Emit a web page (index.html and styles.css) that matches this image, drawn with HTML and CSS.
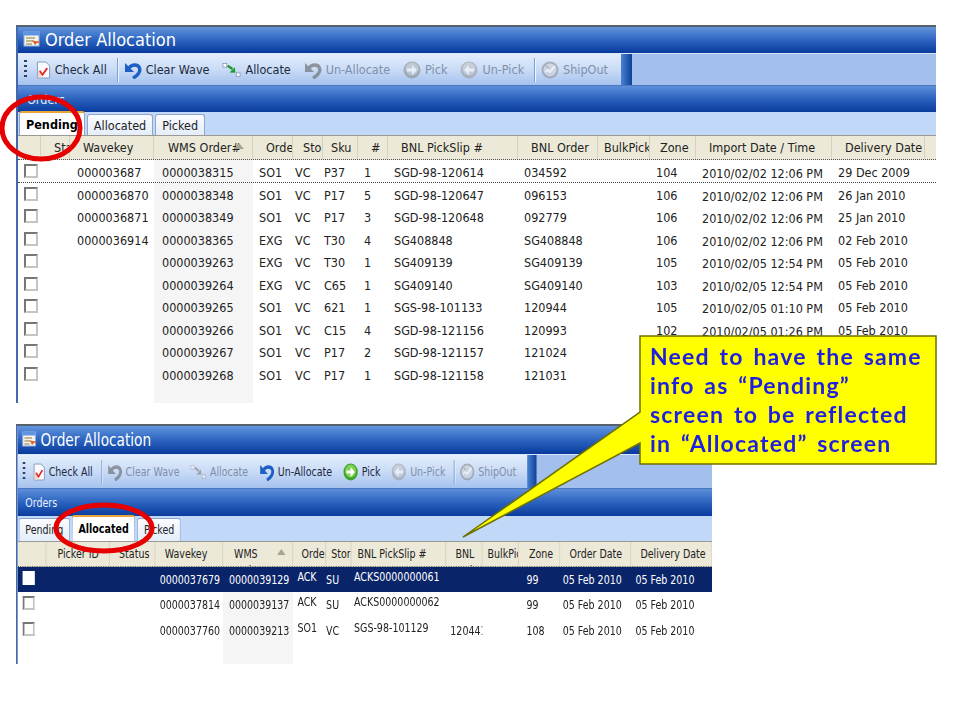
FILE: index.html
```html
<!DOCTYPE html>
<html lang="en">
<head>
  <meta charset="UTF-8">
  <meta name="viewport" content="width=device-width, initial-scale=1.0">
  <title>Order Allocation</title>
  <link rel="stylesheet" href="styles.css">
</head>
<body>
  <svg class="defs" width="0" height="0">
    <symbol id="i-form" viewBox="0 0 18 16">
      <rect x="1" y="1" width="15" height="14" fill="#f4f4ee" stroke="#8fb0e0"/>
      <rect x="1" y="1" width="15" height="3.500" fill="#5f95e0"/>
      <path d="M3 7h9M3 10h7M3 13h6" stroke="#b0a070" stroke-width="1.300"/>
      <path d="M9 9l6 2-3 3z" fill="#e0602a"/>
      <path d="M12 11h5" stroke="#e0602a" stroke-width="1.500"/>
    </symbol>
    <symbol id="i-check" viewBox="0 0 16 20">
      <path d="M1.500 1.500h9l4 4v13h-13z" fill="#fbfbff" stroke="#7f93b8"/>
      <path d="M2 10h4v8H2z" fill="#f3d8c8"/>
      <path d="M4 11l3 4 5-7" fill="none" stroke="#e02a2a" stroke-width="2"/>
    </symbol>
    <symbol id="i-undo" viewBox="0 0 18 18">
      <path d="M1 2v9h9z" fill="currentColor"/>
      <path d="M5 7c3-4 9-4 10.500 0 1.500 4-2.500 8-6.500 10" fill="none" stroke="currentColor" stroke-width="3.400"/>
    </symbol>
    <symbol id="i-allocate" viewBox="0 0 20 16">
      <rect x="1" y="1" width="4" height="4" fill="#fff" stroke="#7d90b5" stroke-width=".8"/>
      <rect x="15" y="11" width="4" height="4" fill="#fff" stroke="#7d90b5" stroke-width=".8"/>
      <path d="M6 3.500l5 3.500" stroke="#1f9a2c" stroke-width="2.500"/>
      <path d="M8 10.500L14 11l-.5-6z" fill="#1f9a2c"/>
    </symbol>
    <symbol id="i-pick" viewBox="0 0 18 18">
      <circle cx="9" cy="9" r="8.500" fill="#3aa629"/>
      <circle cx="9" cy="8" r="6.500" fill="#84d054"/>
      <path d="M4 7.500h5V4l5 5-5 5v-3.500H4z" fill="#fff"/>
    </symbol>
    <symbol id="i-back" viewBox="0 0 18 18">
      <circle cx="9" cy="9" r="8.500" fill="#8f9aa8"/>
      <circle cx="9" cy="8" r="6.500" fill="#b9c2cc"/>
      <path d="M14 7.500H9V4L4 9l5 5v-3.500h5z" fill="#fff"/>
    </symbol>
    <symbol id="i-ship" viewBox="0 0 18 18">
      <circle cx="9" cy="9" r="7.500" fill="#c9d2dc" stroke="#7e8a98" stroke-width="2"/>
      <path d="M4 11l3-2 2 2 5-6" fill="none" stroke="#fff" stroke-width="2"/>
      <path d="M5 5l3 2" stroke="#7e8a98" stroke-width="1.500"/>
    </symbol>
  </svg>

  <section class="window pending-window">
    <h1 class="title"><svg class="title-icon"><use href="#i-form"/></svg>Order Allocation</h1>
    <div class="band">
      <div class="strip">
        <span class="grip"></span>
        <span class="tool"><svg class="icon small"><use href="#i-check"/></svg>Check All</span>
        <span class="sep"></span>
        <span class="tool"><svg class="icon blue"><use href="#i-undo"/></svg>Clear Wave</span>
        <span class="tool"><svg class="icon wide"><use href="#i-allocate"/></svg>Allocate</span>
        <span class="tool off"><svg class="icon blue"><use href="#i-undo"/></svg>Un-Allocate</span>
        <span class="tool off"><svg class="icon"><use href="#i-pick"/></svg>Pick</span>
        <span class="tool off"><svg class="icon"><use href="#i-back"/></svg>Un-Pick</span>
        <span class="sep"></span>
        <span class="tool off"><svg class="icon"><use href="#i-ship"/></svg>ShipOut</span>
      </div>
      <span class="strip-end"></span>
    </div>
    <div class="panel-head">Orders</div>
    <div class="tabs">
      <span class="tab active">Pending</span>
      <span class="tab">Allocated</span>
      <span class="tab">Picked</span>
    </div>
    <div class="grid">
      <div class="row head">
        <div></div><div class="th">Status</div><div class="th">Wavekey</div><div class="th">WMS Order#<i class="sort"></i></div><div class="th">Order Type</div><div class="th">Store</div><div class="th">Sku Type</div><div class="th">#  of Sku</div><div class="th">BNL PickSlip #</div><div class="th">BNL Order Key</div><div class="th bulk">BulkPick</div><div class="th zone">Zone</div><div class="th">Import Date / Time</div><div class="th">Delivery Date</div>
      </div>
      <div class="row focus">
        <div><span class="box"></span></div><div></div><div>000003687</div><div class="sorted">0000038315</div><div>SO1</div><div>VC</div><div>P37</div><div>1</div><div>SGD-98-120614</div><div>034592</div><div></div><div>104</div><div class="low">2010/02/02 12:06 PM</div><div>29 Dec 2009</div>
      </div>
      <div class="row">
        <div><span class="box"></span></div><div></div><div>0000036870</div><div class="sorted">0000038348</div><div>SO1</div><div>VC</div><div>P17</div><div>5</div><div>SGD-98-120647</div><div>096153</div><div></div><div>106</div><div class="low">2010/02/02 12:06 PM</div><div>26 Jan 2010</div>
      </div>
      <div class="row">
        <div><span class="box"></span></div><div></div><div>0000036871</div><div class="sorted">0000038349</div><div>SO1</div><div>VC</div><div>P17</div><div>3</div><div>SGD-98-120648</div><div>092779</div><div></div><div>106</div><div class="low">2010/02/02 12:06 PM</div><div>25 Jan 2010</div>
      </div>
      <div class="row">
        <div><span class="box"></span></div><div></div><div>0000036914</div><div class="sorted">0000038365</div><div>EXG</div><div>VC</div><div>T30</div><div>4</div><div>SG408848</div><div>SG408848</div><div></div><div>106</div><div class="low">2010/02/02 12:06 PM</div><div>02 Feb 2010</div>
      </div>
      <div class="row">
        <div><span class="box"></span></div><div></div><div></div><div class="sorted">0000039263</div><div>EXG</div><div>VC</div><div>T30</div><div>1</div><div>SG409139</div><div>SG409139</div><div></div><div>105</div><div class="low">2010/02/05 12:54 PM</div><div>05 Feb 2010</div>
      </div>
      <div class="row">
        <div><span class="box"></span></div><div></div><div></div><div class="sorted">0000039264</div><div>EXG</div><div>VC</div><div>C65</div><div>1</div><div>SG409140</div><div>SG409140</div><div></div><div>103</div><div class="low">2010/02/05 12:54 PM</div><div>05 Feb 2010</div>
      </div>
      <div class="row">
        <div><span class="box"></span></div><div></div><div></div><div class="sorted">0000039265</div><div>SO1</div><div>VC</div><div>621</div><div>1</div><div>SGS-98-101133</div><div>120944</div><div></div><div>105</div><div class="low">2010/02/05 01:10 PM</div><div>05 Feb 2010</div>
      </div>
      <div class="row">
        <div><span class="box"></span></div><div></div><div></div><div class="sorted">0000039266</div><div>SO1</div><div>VC</div><div>C15</div><div>4</div><div>SGD-98-121156</div><div>120993</div><div></div><div>102</div><div class="low">2010/02/05 01:26 PM</div><div>05 Feb 2010</div>
      </div>
      <div class="row">
        <div><span class="box"></span></div><div></div><div></div><div class="sorted">0000039267</div><div>SO1</div><div>VC</div><div>P17</div><div>2</div><div>SGD-98-121157</div><div>121024</div>
      </div>
      <div class="row">
        <div><span class="box"></span></div><div></div><div></div><div class="sorted">0000039268</div><div>SO1</div><div>VC</div><div>P17</div><div>1</div><div>SGD-98-121158</div><div>121031</div>
      </div>
      <div class="row filler"><div class="sorted"></div></div>
    </div>
  </section>

  <section class="window allocated-window">
    <h1 class="title"><svg class="title-icon"><use href="#i-form"/></svg>Order Allocation</h1>
    <div class="band">
      <div class="strip">
        <span class="grip"></span>
        <span class="tool"><svg class="icon small"><use href="#i-check"/></svg>Check All</span>
        <span class="sep"></span>
        <span class="tool off"><svg class="icon blue"><use href="#i-undo"/></svg>Clear Wave</span>
        <span class="tool off"><svg class="icon wide"><use href="#i-allocate"/></svg>Allocate</span>
        <span class="tool"><svg class="icon blue"><use href="#i-undo"/></svg>Un-Allocate</span>
        <span class="tool"><svg class="icon"><use href="#i-pick"/></svg>Pick</span>
        <span class="tool off"><svg class="icon"><use href="#i-back"/></svg>Un-Pick</span>
        <span class="sep"></span>
        <span class="tool off"><svg class="icon"><use href="#i-ship"/></svg>ShipOut</span>
      </div>
      <span class="strip-end"></span>
    </div>
    <div class="panel-head">Orders</div>
    <div class="tabs">
      <span class="tab">Pending</span>
      <span class="tab active">Allocated</span>
      <span class="tab">Picked</span>
    </div>
    <div class="grid">
      <div class="row head">
        <div></div><div class="th picker">Picker ID</div><div class="th">Status</div><div class="th">Wavekey</div><div class="th picker">WMS<br>Order #<i class="sort"></i></div><div class="th">Order Type</div><div class="th">Store</div><div class="th">BNL PickSlip #</div><div class="th">BNL Order Key</div><div class="th bulk">BulkPick</div><div class="th">Zone</div><div class="th">Order Date</div><div class="th">Delivery Date</div>
      </div>
      <div class="row selected">
        <div><span class="box"></span></div><div></div><div></div><div>0000037679</div><div class="sorted">0000039129</div><div class="up">ACK</div><div>SU</div><div class="up">ACKS0000000061</div><div></div><div></div><div>99</div><div class="date">05 Feb 2010</div><div>05 Feb 2010</div>
      </div>
      <div class="row">
        <div><span class="box"></span></div><div></div><div></div><div>0000037814</div><div class="sorted">0000039137</div><div class="up">ACK</div><div>SU</div><div class="up">ACKS0000000062</div><div></div><div></div><div>99</div><div class="date">05 Feb 2010</div><div>05 Feb 2010</div>
      </div>
      <div class="row">
        <div><span class="box"></span></div><div></div><div></div><div>0000037760</div><div class="sorted">0000039213</div><div class="up">SO1</div><div>VC</div><div class="up">SGS-98-101129</div><div>120441</div><div></div><div>108</div><div class="date">05 Feb 2010</div><div>05 Feb 2010</div>
      </div>
      <div class="row filler"><div class="sorted"></div></div>
    </div>
  </section>

  <!-- hand drawn marks that sit over the two screens -->
  <svg class="marks" width="960" height="720" viewBox="0 0 960 720">
    <path class="callout" d="M640 336H936V464H640V443L463 537L640 412Z"/>
    <ellipse class="ring" cx="41" cy="128" rx="39" ry="31"/>
    <ellipse class="ring" cx="104" cy="528" rx="48" ry="23"/>
  </svg>
  <p class="note">Need to have the same<br>info as “Pending”<br>screen to be reflected<br>in “Allocated” screen</p>
</body>
</html>
```

FILE: styles.css
```css
body {
  margin: 0;
  padding: 25px 0 0 16px;
  background: #fff;
  font-family: "DejaVu Sans", sans-serif;
  font-stretch: condensed;
  font-size: 12.5px;
  color: #222;
}
.defs {
  position: absolute;
}
.window {
  box-sizing: border-box;
  border-top: 2px solid #58606c;
  border-left: 2px solid #4468ac;
  overflow: hidden;
}
.pending-window {
  width: 920px;
  height: 378px;
  margin-bottom: 21px;
  --title-h: 26px;
  --band-h: 33px;
  --panel-h: 26px;
  --tabs-h: 24px;
  --head-h: 24px;
  --row-h: 22.5px;
  --row-lh: 25px;
  --cols: 23px 29px 84px 99px 40px 30px 35px 30px 130px 80px 52px 46px 136px 93px 1fr;
  --th-pad: 13px;
  --td-pad: 6px;
}
/* this one is the same screen, pasted in narrower */
.allocated-window {
  width: 824px;
  height: 240px;
  transform: scaleX(.845);
  transform-origin: left top;
  --title-h: 28px;
  --band-h: 35px;
  --panel-h: 27px;
  --tabs-h: 26px;
  --head-h: 25px;
  --row-h: 25.3px;
  --row-lh: 25.3px;
  --cols: 34px 75px 54px 80px 83px 39px 30px 112px 43px 43px 49px 84px 1fr;
  --th-pad: 11px;
  --td-pad: 5px;
}
.title {
  display: flex;
  align-items: center;
  gap: 4px;
  box-sizing: border-box;
  height: var(--title-h);
  margin: 0;
  padding: 0 0 2px 5px;
  background: linear-gradient(#6295dd, #2c64c0 50%, #083a9c);
  color: #fff;
  font-size: 18px;
  font-weight: normal;
}
.title-icon {
  width: 18px;
  height: 16px;
}
.band {
  display: flex;
  height: var(--band-h);
  box-sizing: border-box;
  border-top: 1px solid #dbe6f8;
  border-bottom: 1px solid #4d76bd;
  background: #a2bfee;
}
.strip {
  display: flex;
  align-items: center;
  width: 603px;
  padding-left: 6px;
  box-sizing: border-box;
  background: linear-gradient(#e4eefc, #c9dbf6 50%, #a5c2ee);
  white-space: nowrap;
}
.strip-end {
  width: 11px;
  background: linear-gradient(90deg, #4a82d2, #0f4099);
}
.grip {
  width: 3px;
  height: 20px;
  margin-right: 9px;
  background: repeating-linear-gradient(#27406e 0 2px, transparent 2px 5px);
}
.tool {
  display: flex;
  align-items: center;
  gap: 4px;
  margin-right: 13px;
  color: #1c2a40;
}
.tool.off {
  color: #7f8fa8;
}
.tool.off .icon {
  filter: grayscale(1);
  opacity: .55;
}
.icon {
  width: 18px;
  height: 18px;
}
.icon.small {
  width: 15px;
  height: 20px;
}
.icon.wide {
  width: 19px;
  height: 16px;
}
.icon.blue {
  color: #1d5fc4;
}
.sep {
  width: 1px;
  height: 24px;
  margin: 0 6px 0 -3px;
  background: #7f9fce;
  box-shadow: 1px 0 #eef4fd;
}
.panel-head {
  display: flex;
  align-items: center;
  height: var(--panel-h);
  padding-left: 9px;
  background: linear-gradient(#5c8fda, #2a62be 50%, #0a3c9e);
  color: #e8f0fc;
}
.tabs {
  display: flex;
  align-items: flex-end;
  gap: 2px;
  height: var(--tabs-h);
  box-sizing: border-box;
  padding-left: 1px;
  border-bottom: 1px solid #9a9a92;
  background: #c2d8f8;
}
.tab {
  box-sizing: border-box;
  height: calc(100% - 2px);
  padding: 3px 6px 0;
  border: 1px solid #8ea6c8;
  border-bottom: 0;
  border-radius: 3px 3px 0 0;
  background: linear-gradient(#fafcff, #e4edf9);
}
.tab.active {
  height: calc(100% + 1px);
  padding: 4px 6px 0;
  border-top: 2px solid #e8a436;
  background: #fff;
  color: #000;
  font-weight: bold;
}
.allocated-window .tab {
  padding-left: 7px;
  padding-right: 7px;
}
.row {
  display: grid;
  grid-template-columns: var(--cols);
  height: var(--row-h);
  line-height: var(--row-lh);
}
.row > div {
  padding-left: var(--td-pad);
  overflow: hidden;
  white-space: nowrap;
}
.head {
  height: var(--head-h);
  line-height: 17px;
  background: #ece9d8;
  border-bottom: 1px dotted #555;
  box-sizing: border-box;
}
.head > div {
  position: relative;
  padding: 3px 0 0 var(--th-pad);
  white-space: normal;
  border-right: 1px solid #d6d2bc;
  box-sizing: border-box;
}
.head > .bulk {
  padding-left: 6px;
}
.head > .zone {
  padding-left: 10px;
}
.head > .picker {
  padding-left: 13px;
}
/* a few columns sit tighter than the rest */
.pending-window .row > :nth-child(3) {
  padding-left: 7px;
}
.pending-window .row > :nth-child(4) {
  padding-left: 8px;
}
.pending-window .row > :nth-child(6) {
  padding-left: 2px;
}
.pending-window .row > :nth-child(7) {
  padding-left: 1px;
}
.pending-window .head > :nth-child(3) {
  padding-left: 13px;
}
.pending-window .head > :nth-child(4) {
  padding-left: 14px;
}
.pending-window .head > :nth-child(6) {
  padding-left: 10px;
}
.pending-window .head > :nth-child(7) {
  padding-left: 8px;
}
.allocated-window .row > :nth-child(5) {
  padding-left: 7px;
}
.allocated-window .row > :nth-child(7) {
  padding-left: 0;
}
.allocated-window .row > :nth-child(8) {
  padding-left: 3px;
}
.allocated-window .row > :nth-child(11) {
  padding-left: 9px;
}
.allocated-window .head > :nth-child(5) {
  padding-left: 13px;
}
.allocated-window .head > :nth-child(6) {
  padding-left: 10px;
}
.allocated-window .head > :nth-child(7) {
  padding-left: 6px;
}
.allocated-window .head > :nth-child(8) {
  padding-left: 7px;
}
.allocated-window .head > :nth-child(11) {
  padding-left: 12px;
}
.sort {
  position: absolute;
  top: 7px;
  right: 8px;
  border: 5px solid transparent;
  border-top: 0;
  border-bottom: 6px solid #a8a494;
}
.sorted {
  background: #f5f5f5;
}
.focus {
  border-bottom: 1px dotted #444;
  box-sizing: border-box;
}
.selected {
  background: #0a246a;
  color: #fff;
}
.selected .sorted {
  background: none;
}
.selected .box {
  background: #fff;
  border-color: #fff;
}
.box {
  display: inline-block;
  box-sizing: border-box;
  width: 14px;
  height: 14px;
  vertical-align: -1px;
  border: 2px solid #c4c4c0;
  border-top-color: #777;
  border-left-color: #777;
  background: #fff;
}
.allocated-window .box {
  margin-left: 1px;
}
.low {
  line-height: 28.5px;
}
.up {
  line-height: 20px;
}
.row > .date {
  padding-left: 3px;
}
.filler {
  height: 30px;
}
.filler .sorted {
  grid-column: 4;
}
.allocated-window .filler .sorted {
  grid-column: 5;
}
.marks {
  position: absolute;
  top: 0;
  left: 0;
}
.callout {
  fill: #ffff00;
  stroke: #6f7000;
  stroke-width: 1.5;
}
.ring {
  fill: none;
  stroke: #e60000;
  stroke-width: 5;
}
.note {
  position: absolute;
  top: 342px;
  left: 650px;
  margin: 0;
  color: #1f1fe0;
  font-family: Lato, sans-serif;
  font-stretch: normal;
  font-size: 23px;
  font-weight: bold;
  letter-spacing: 1.2px;
  word-spacing: 3px;
  line-height: 29px;
  white-space: nowrap;
}
```
